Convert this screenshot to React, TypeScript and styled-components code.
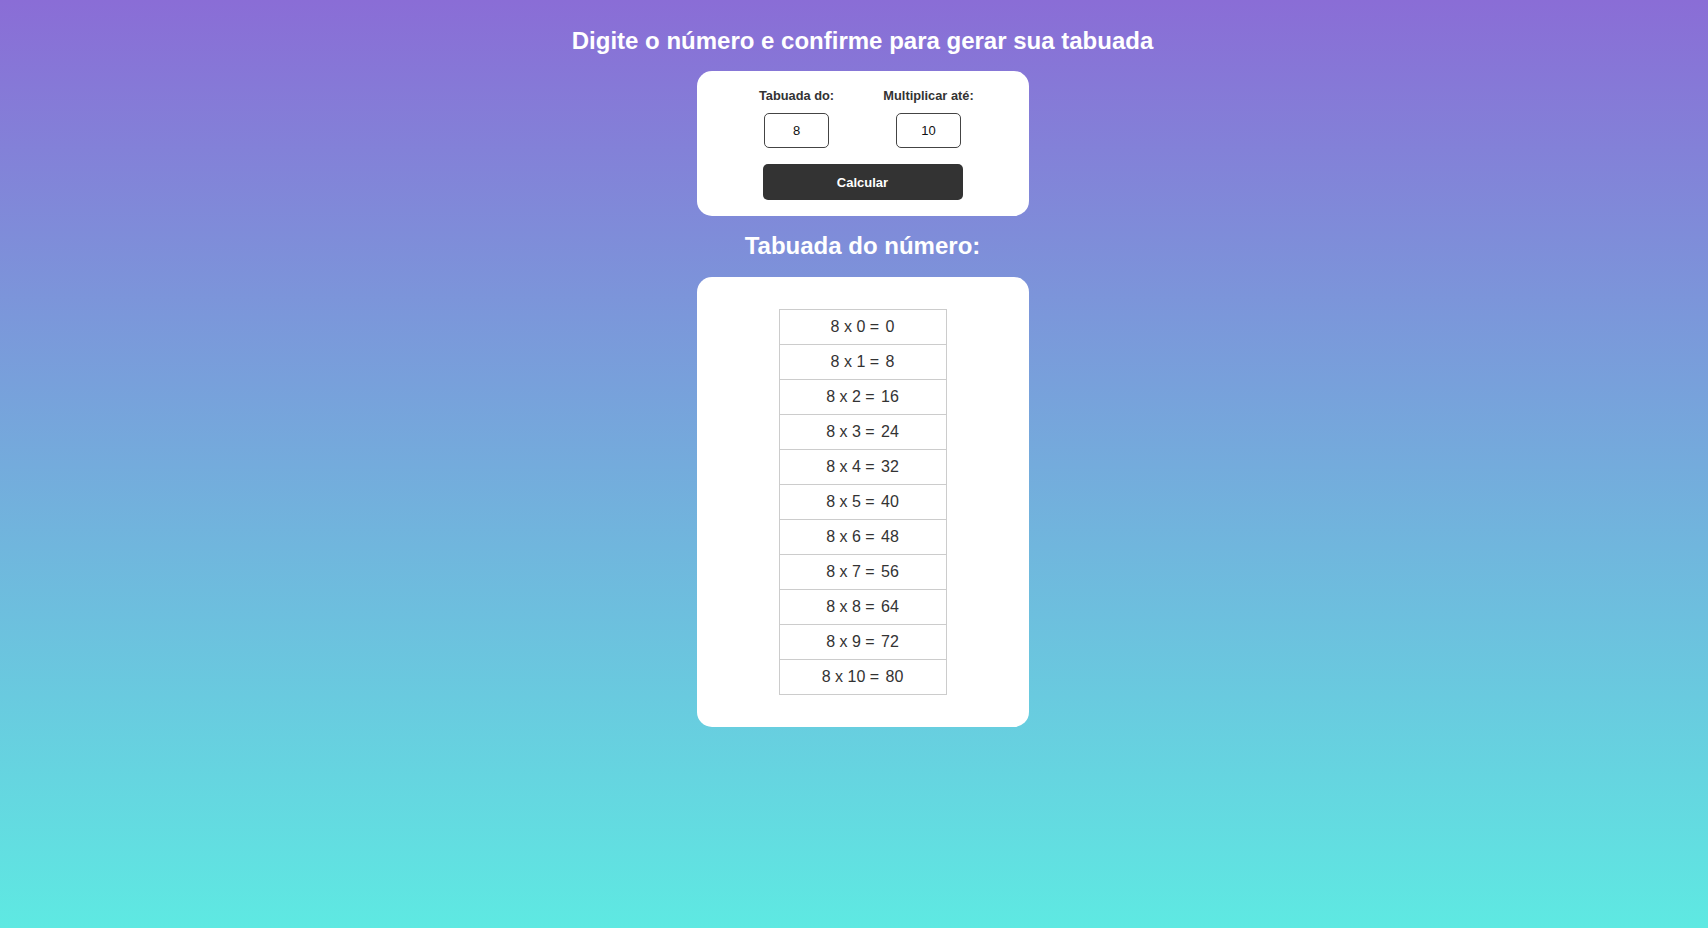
import React, { useState } from "react";
import styled, { createGlobalStyle } from "styled-components";

const GlobalStyle = createGlobalStyle`
  html, body {
    margin: 0;
    padding: 0;
  }
  body {
    min-height: 100vh;
    background: linear-gradient(to bottom, #8a6dd6 0%, #5ee9e2 100%);
    background-attachment: fixed;
    font-family: "Liberation Sans", Arial, sans-serif;
  }
`;

const Page = styled.main`
  box-sizing: border-box;
  min-height: 100vh;
  padding: 27px 0 0 17px;
  display: flex;
  flex-direction: column;
  align-items: center;
`;

const Title = styled.h1`
  margin: 0 0 16px;
  font-size: 24px;
  font-weight: 700;
  line-height: normal;
  color: #ffffff;
  text-align: center;
`;

const Card = styled.section<{ $pad: string }>`
  box-sizing: border-box;
  width: 332px;
  padding: ${(p) => p.$pad};
  background: #ffffff;
  border-radius: 15px;
  display: flex;
  flex-direction: column;
  align-items: center;
`;

const Fields = styled.div`
  display: grid;
  grid-template-columns: 100px 100px;
  column-gap: 32px;
  justify-content: center;
`;

const Field = styled.label`
  display: flex;
  flex-direction: column;
  align-items: center;
`;

const FieldLabel = styled.span`
  font-size: 12.8px;
  font-weight: 700;
  line-height: normal;
  color: #333333;
  white-space: nowrap;
`;

const NumberInput = styled.input`
  box-sizing: border-box;
  margin-top: 10px;
  width: 65px;
  height: 35px;
  border: 1px solid #444444;
  border-radius: 5px;
  font-family: "Liberation Sans", Arial, sans-serif;
  font-size: 13px;
  color: #111111;
  text-align: center;
  background: #ffffff;
  outline: none;
  -moz-appearance: textfield;
  &::-webkit-outer-spin-button,
  &::-webkit-inner-spin-button {
    -webkit-appearance: none;
    margin: 0;
  }
`;

const Button = styled.button`
  margin-top: 16px;
  width: 200px;
  height: 36px;
  border: none;
  border-radius: 5px;
  background: #333333;
  color: #ffffff;
  font-family: "Liberation Sans", Arial, sans-serif;
  font-size: 13px;
  font-weight: 700;
  cursor: pointer;
`;

const SubTitle = styled.h2`
  margin: 16px 0 17px;
  font-size: 24px;
  font-weight: 700;
  line-height: normal;
  color: #ffffff;
  text-align: center;
`;

const Table = styled.table`
  width: 168px;
  border-collapse: collapse;
`;

const Cell = styled.td`
  border: 1px solid #cccccc;
  padding: 8px;
  height: 18px;
  font-size: 16px;
  line-height: 18px;
  color: #333333;
  text-align: center;
  white-space: nowrap;
`;

const Result = styled.span`
  margin-left: 2px;
`;

export default function App() {
  const [num, setNum] = useState("8");
  const [limit, setLimit] = useState("10");
  const [table, setTable] = useState({ n: 8, max: 10 });

  const rows = Array.from({ length: table.max + 1 }, (_, i) => i);

  return (
    <>
      <GlobalStyle />
      <Page>
        <Title>Digite o número e confirme para gerar sua tabuada</Title>
        <Card $pad="17px 16px 16px">
          <Fields>
            <Field>
              <FieldLabel>Tabuada do:</FieldLabel>
              <NumberInput
                type="number"
                value={num}
                onChange={(e) => setNum(e.target.value)}
              />
            </Field>
            <Field>
              <FieldLabel>Multiplicar até:</FieldLabel>
              <NumberInput
                type="number"
                value={limit}
                onChange={(e) => setLimit(e.target.value)}
              />
            </Field>
          </Fields>
          <Button
            onClick={() =>
              setTable({ n: Number(num) || 0, max: Math.max(0, Number(limit) || 0) })
            }
          >
            Calcular
          </Button>
        </Card>
        <SubTitle>Tabuada do número:</SubTitle>
        <Card $pad="32px 0">
          <Table>
            <tbody>
              {rows.map((i) => (
                <tr key={i}>
                  <Cell>
                    {table.n} x {i} = <Result>{table.n * i}</Result>
                  </Cell>
                </tr>
              ))}
            </tbody>
          </Table>
        </Card>
      </Page>
    </>
  );
}
